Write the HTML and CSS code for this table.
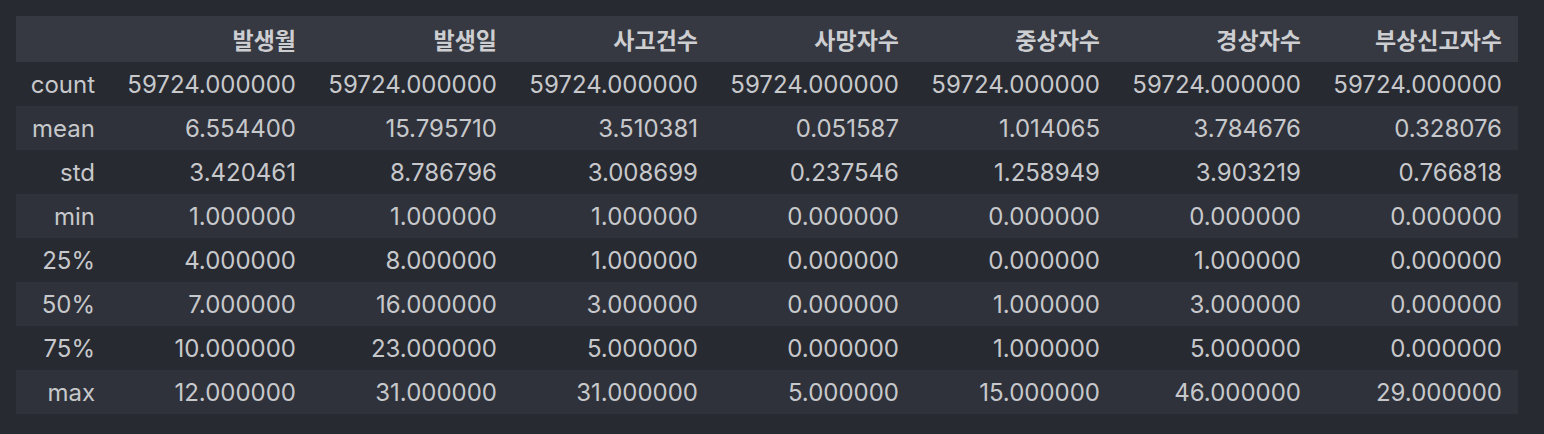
FILE: index.html
```html
<!DOCTYPE html>
<html lang="ko">
<head>
<meta charset="utf-8">
<link rel="stylesheet" href="styles.css">
</head>
<body>
<div class="wrap">
<table class="df">
<thead>
<tr><th class="idx"></th><th>발생월</th><th>발생일</th><th>사고건수</th><th>사망자수</th><th>중상자수</th><th>경상자수</th><th>부상신고자수</th></tr>
</thead>
<tbody>
<tr><th class="idx">count</th><td>59724.000000</td><td>59724.000000</td><td>59724.000000</td><td>59724.000000</td><td>59724.000000</td><td>59724.000000</td><td>59724.000000</td></tr>
<tr><th class="idx">mean</th><td>6.554400</td><td>15.795710</td><td>3.510381</td><td>0.051587</td><td>1.014065</td><td>3.784676</td><td>0.328076</td></tr>
<tr><th class="idx">std</th><td>3.420461</td><td>8.786796</td><td>3.008699</td><td>0.237546</td><td>1.258949</td><td>3.903219</td><td>0.766818</td></tr>
<tr><th class="idx">min</th><td>1.000000</td><td>1.000000</td><td>1.000000</td><td>0.000000</td><td>0.000000</td><td>0.000000</td><td>0.000000</td></tr>
<tr><th class="idx">25%</th><td>4.000000</td><td>8.000000</td><td>1.000000</td><td>0.000000</td><td>0.000000</td><td>1.000000</td><td>0.000000</td></tr>
<tr><th class="idx">50%</th><td>7.000000</td><td>16.000000</td><td>3.000000</td><td>0.000000</td><td>1.000000</td><td>3.000000</td><td>0.000000</td></tr>
<tr><th class="idx">75%</th><td>10.000000</td><td>23.000000</td><td>5.000000</td><td>0.000000</td><td>1.000000</td><td>5.000000</td><td>0.000000</td></tr>
<tr><th class="idx">max</th><td>12.000000</td><td>31.000000</td><td>31.000000</td><td>5.000000</td><td>15.000000</td><td>46.000000</td><td>29.000000</td></tr>
</tbody>
</table>
</div>
</body>
</html>
```

FILE: styles.css
```css
html, body {
  margin: 0;
  padding: 0;
  background: #272a31;
}
.wrap {
  padding: 16px 26px 20px 16px;
}
.df {
  border-collapse: collapse;
  border-spacing: 0;
  font-family: Inter, "Noto Sans CJK KR", sans-serif;
  font-size: 24px;
  color: #c7c8cb;
  width: 1502px;
  table-layout: fixed;
}
.df th, .df td {
  padding: 0 16px 0 0;
  text-align: right;
  white-space: nowrap;
  font-weight: 400;
}
.df thead tr {
  background: #363941;
  height: 46px;
}
.df thead th {
  font-weight: 700;
  font-size: 23px;
  color: #cdced1;
}
.df tbody tr {
  height: 44px;
}
.df tbody tr:nth-child(even) {
  background: #2f323a;
}
.df th.idx {
  width: 79px;
}
```
